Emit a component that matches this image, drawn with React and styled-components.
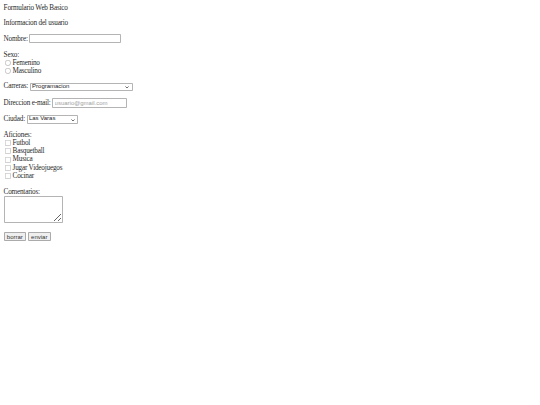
import React from "react";
import styled, { createGlobalStyle } from "styled-components";

const GlobalStyle = createGlobalStyle`
  html, body {
    margin: 0;
    background: #ffffff;
  }
`;

// the reference is a plain browser form photographed at 45%
const Page = styled.div`
  zoom: 0.45;
  padding: 8px;
  font-family: "Liberation Serif", "Times New Roman", serif;
  font-size: 16px;
  letter-spacing: -0.45px;
  color: #2a2a2a;
`;

const Form = styled.form`
  margin: 0;
`;

const Section = styled.p`
  margin: 16px 0;
`;

const field = `
  box-sizing: border-box;
  border: 1px solid #b4b4b4;
  border-radius: 2px;
  background: #ffffff;
  font-family: "Liberation Sans", Arial, sans-serif;
  font-size: 13.33px;
  letter-spacing: 0;
  color: #222222;
`;

const TextInput = styled.input`
  ${field}
  width: ${(p) => p.$width}px;
  height: 21px;
  padding: 1px 3px;
  &::placeholder {
    color: #a0a0a0;
  }
`;

const SelectBox = styled.span`
  ${field}
  position: relative;
  display: inline-flex;
  align-items: center;
  width: ${(p) => p.$width}px;
  height: 19px;
  vertical-align: middle;
`;

const Select = styled.select`
  appearance: none;
  width: 100%;
  height: 17px;
  border: none;
  background: transparent;
  padding: 0 18px 0 3px;
  font: inherit;
  line-height: 17px;
  color: inherit;
  outline: none;
`;

const Chevron = styled.svg`
  position: absolute;
  right: 6px;
  top: 6px;
  width: 9px;
  height: 6px;
  pointer-events: none;
`;

const Choice = styled.input`
  margin: 3px 3px 2.6px 4px;
  width: 13px;
  height: 13px;
  vertical-align: -2.5px;
  accent-color: #767676;
  opacity: 0.85;
`;

const TextArea = styled.textarea`
  ${field}
  display: inline-block;
  width: 132px;
  height: 61px;
`;

const Button = styled.button`
  box-sizing: border-box;
  margin-right: 4px;
  padding: 1px 5px;
  border: 1px solid #ababab;
  border-radius: 2px;
  background: #efefef;
  font-family: "Liberation Sans", Arial, sans-serif;
  font-size: 13.33px;
  letter-spacing: 0;
  color: #333333;
`;

function Dropdown({ width, value, options }) {
  return (
    <SelectBox $width={width}>
      <Select defaultValue={value}>
        {options.map((o) => (
          <option key={o}>{o}</option>
        ))}
      </Select>
      <Chevron viewBox="0 0 9 6">
        <path d="M1 1 L4.5 4.5 L8 1" fill="none" stroke="#333" strokeWidth="1.6" />
      </Chevron>
    </SelectBox>
  );
}

const aficiones = ["Futbol", "Basquetball", "Musica", "Jugar Videojuegos", "Cocinar"];

export default function App() {
  return (
    <Page>
      <GlobalStyle />
      <Form>
        Formulario Web Basico
        <Section>Informacion del usuario</Section>
        <Section>
          Nombre: <TextInput type="text" $width={204} />
        </Section>
        <Section>
          Sexo:
          <br />
          <Choice type="radio" name="sexo" />
          Femenino
          <br />
          <Choice type="radio" name="sexo" />
          Masculino
        </Section>
        <Section>
          Carreras:{" "}
          <Dropdown width={229} value="Programacion" options={["Programacion", "Redes", "Diseño"]} />
        </Section>
        <Section>
          Direccion e-mail:{" "}
          <TextInput type="email" placeholder="usuario@gmail.com" $width={167} />
        </Section>
        <Section>
          Ciudad: <Dropdown width={115} value="Las Varas" options={["Las Varas", "Tepic"]} />
        </Section>
        <Section>
          Aficiones:
          {aficiones.map((a) => (
            <React.Fragment key={a}>
              <br />
              <Choice type="checkbox" />
              {a}
            </React.Fragment>
          ))}
        </Section>
        <Section>
          Comentarios:
          <br />
          <TextArea />
        </Section>
        <Section>
          <Button type="reset">borrar</Button>
          <Button type="submit">enviar</Button>
        </Section>
      </Form>
    </Page>
  );
}
